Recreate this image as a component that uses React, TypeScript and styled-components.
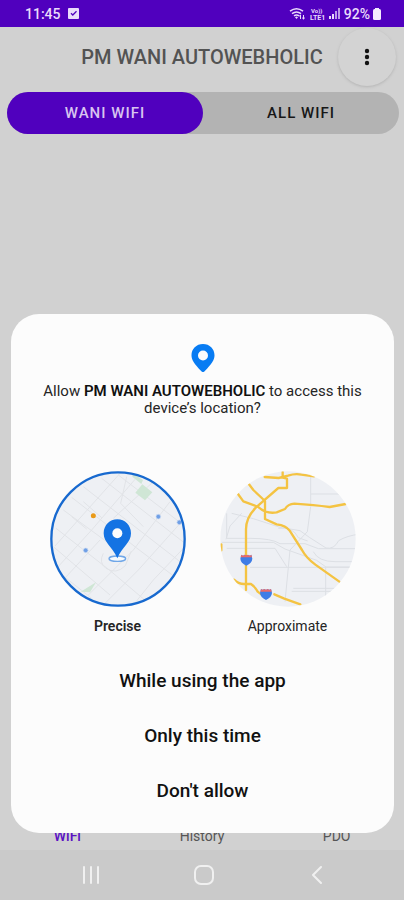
import React, { useState } from "react";
import styled, { createGlobalStyle } from "styled-components";

const GlobalStyle = createGlobalStyle`
  *, *::before, *::after { box-sizing: border-box; }
  body { margin: 0; background: #d1d1d1; font-family: Roboto, "Liberation Sans", sans-serif; }
  button, input { font: inherit; color: inherit; }
  button { padding: 0; border: 0; background: none; cursor: pointer; }
`;

const Screen = styled.div`
  position: relative;
  display: flex;
  flex-direction: column;
  min-height: 100vh;
  background: #d1d1d1;
`;

const StatusBar = styled.header`
  display: flex;
  align-items: center;
  justify-content: space-between;
  height: 27px;
  padding: 0 22px 0 25px;
  background: #5000be;
  color: #eadcfb;
  font-size: 14px;
  font-weight: 500;
`;

const StatusGroup = styled.div<{ $gap: number }>`
  display: flex;
  align-items: center;
  gap: ${({ $gap }) => $gap}px;
`;

const Battery = styled.span`
  display: flex;
  align-items: center;
  gap: 2px;
`;

const AppBar = styled.div`
  display: grid;
  grid-template-columns: 68px 1fr 68px;
  align-items: center;
  height: 60px;
`;

const Title = styled.h1`
  grid-column: 2;
  justify-self: center;
  margin: 0;
  color: #535353;
  font-size: 20px;
  font-weight: 500;
  line-height: 24px;
  text-align: center;
  white-space: nowrap;
`;

const MenuButton = styled.button`
  display: grid;
  place-items: center;
  justify-self: end;
  width: 58px;
  height: 58px;
  margin-right: 8px;
  border-radius: 50%;
  background: #d3d3d3;
  box-shadow: 0 1px 3px #b4b4b4;
`;

const Segments = styled.div`
  display: grid;
  grid-template-columns: 1fr 1fr;
  height: 42px;
  margin: 5px 5px 0 7px;
  border-radius: 21px;
  background: #b3b3b3;
`;

const Segment = styled.button<{ $active: boolean }>`
  border-radius: 21px;
  background: ${({ $active }) => ($active ? "#5000be" : "transparent")};
  color: ${({ $active }) => ($active ? "#d8c4f0" : "#171717")};
  font-size: 15px;
  font-weight: 500;
  letter-spacing: 1px;
`;

const TabBar = styled.nav`
  display: grid;
  grid-template-columns: repeat(3, 1fr);
  align-items: end;
  height: 56px;
  margin-top: auto;
  padding-bottom: 6px;
`;

const TabLink = styled.a<{ $active?: boolean }>`
  color: ${({ $active }) => ($active ? "#5a10c4" : "#555555")};
  font-size: 14px;
  font-weight: ${({ $active }) => ($active ? 500 : 400)};
  line-height: 16px;
  text-align: center;
  text-decoration: none;
`;

const SystemNav = styled.nav`
  display: grid;
  grid-template-columns: repeat(3, 1fr);
  height: 50px;
  padding: 0 30px 0 34px;
  background: #cacaca;
`;

const NavButton = styled.button`
  display: grid;
  place-items: center;
`;

const Dialog = styled.section`
  position: absolute;
  right: 10px;
  bottom: 67px;
  left: 11px;
  display: flex;
  flex-direction: column;
  align-items: center;
  padding: 30px 24px 15px;
  border-radius: 28px;
  background: #fcfcfc;
  color: #252525;
`;

const Question = styled.h2`
  max-width: 328px;
  margin: 11px 0 0;
  font-size: 15px;
  font-weight: 400;
  line-height: 17px;
  text-align: center;
`;

const AppName = styled.strong`
  color: #111111;
  font-weight: 600;
`;

const Choices = styled.div`
  display: flex;
  justify-content: center;
  gap: 34px;
  margin-top: 54px;
`;

const Choice = styled.label<{ $bold: boolean }>`
  display: flex;
  flex-direction: column;
  align-items: center;
  gap: 10px;
  width: 136px;
  font-size: 14px;
  font-weight: ${({ $bold }) => ($bold ? 600 : 400)};
  line-height: 18px;
  cursor: pointer;
`;

const HiddenRadio = styled.input`
  position: absolute;
  width: 1px;
  height: 1px;
  margin: 0;
  opacity: 0;
`;

const Actions = styled.div`
  display: flex;
  flex-direction: column;
  align-self: stretch;
  margin-top: 18px;
`;

const Action = styled.button`
  height: 55px;
  color: #111111;
  font-size: 19px;
  font-weight: 500;
`;

const CheckIcon = () => (
  <svg width="11" height="13" viewBox="0 0 11 13" aria-hidden="true">
    <rect y="1" width="11" height="11" rx="1" fill="#eadcfb" />
    <path d="M3 6.3 4.8 8 8.5 4.3" fill="none" stroke="#5000be" strokeWidth="1.3" />
  </svg>
);

const WifiIcon = () => (
  <svg width="17" height="14" viewBox="0 0 17 14" fill="none" stroke="#eadcfb" aria-hidden="true">
    <path d="M1 4.2Q7.5-.8 14 4.2M3 6.6q4.5-3.4 9 0M5 8.8q2.5-1.8 5 0" strokeWidth="1.5" />
    <path d="m6 10.2 1.5-.8 1.5.8-1.5 1.8z" fill="#eadcfb" stroke="none" />
    <path d="M11.5 12V8m-1.4 1.3L11.5 8M14.5 8v4m-1.4-1.3 1.4 1.3 1.4-1.3" />
  </svg>
);

const LteIcon = () => (
  <svg width="15" height="14" viewBox="0 0 15 14" aria-hidden="true" fill="#eadcfb" fontFamily="Roboto, sans-serif" fontWeight="700">
    <text x="1" y="6" fontSize="6">Vo))</text>
    <text x="0" y="13" fontSize="7">LTE1</text>
  </svg>
);

const SignalIcon = () => (
  <svg width="11" height="12" viewBox="0 0 11 12" fill="#eadcfb" aria-hidden="true">
    <rect y="8" width="2" height="3" />
    <rect x="3" y="6" width="2" height="5" />
    <rect x="6" y="3" width="2" height="8" opacity=".7" />
    <rect x="9" y="0" width="2" height="11" opacity=".7" />
  </svg>
);

const BatteryIcon = () => (
  <svg width="10" height="13" viewBox="0 0 10 13" fill="#f4ebff" aria-hidden="true">
    <rect x="1" y="2" width="8" height="11" rx="1.5" />
    <rect x="3" y="1" width="4" height="2" />
  </svg>
);

const DotsIcon = () => (
  <svg width="6" height="18" viewBox="0 0 6 18" fill="#111111" aria-hidden="true">
    <circle cx="3" cy="3" r="2.2" />
    <circle cx="3" cy="9" r="2.2" />
    <circle cx="3" cy="15" r="2.2" />
  </svg>
);

const PinIcon = () => (
  <svg width="24" height="28" viewBox="0 0 24 28" aria-hidden="true">
    <path d="M12 0C5.3 0 .5 4.9.5 11.2c0 5 2.8 8.5 9.9 16.1.9 1 2.3 1 3.2 0 7.1-7.6 9.9-11.1 9.9-16.1C23.5 4.9 18.7 0 12 0Z" fill="#087cf3" />
    <circle cx="12" cy="11.5" r="5" fill="#fcfcfc" />
  </svg>
);

const PreciseMap = ({ selected }: { selected: boolean }) => (
  <svg width="136" height="136" viewBox="30 33 408 408" aria-hidden="true">
    <defs>
      <clipPath id="precise-clip"><circle cx="234" cy="237" r="200" /></clipPath>
    </defs>
    <circle cx="234" cy="237" r="200" fill="#eef0f4" />
    <g clipPath="url(#precise-clip)">
      <g fill="none" stroke="#e1e3e7" strokeWidth="3">
        <path d="M130 80 420 305M95 112 290 264 430 370M70 150 200 245M48 205l160 125 130 110M40 260l170 145M35 320l120 95M185 55l250 195M235 45l195 150" />
        <path d="M240 40 45 258M285 58 155 210 50 325M340 65 220 175M180 240 65 365M390 125 280 270 145 405M425 185 295 330 195 430M435 260 340 360 280 435M130 125l55 48M95 170l45 37" />
        <path d="M260 50l-18 80 68 70M190 280q-15 28 8 45 30 20 58-8l18-44" />
      </g>
      <path d="M278 40l31 20-5 12-27-22ZM307 73l30 24-22 24-29-23Z" fill="#cfe6d5" />
      <path d="M168 367l-18 30-28-2Z" fill="#cfe6d5" />
      <circle cx="160" cy="167" r="7.5" fill="#e99a18" />
      <g fill="#6f9fe6" stroke="#cddcf3" strokeWidth="2">
        <circle cx="355" cy="170" r="7" />
        <circle cx="137" cy="271" r="7" />
        <circle cx="418" cy="187" r="7" />
      </g>
    </g>
    <ellipse cx="232" cy="296" rx="25" ry="8" fill="#f7fafd" stroke="#70a7e8" strokeWidth="4" />
    <path d="M232 178c-23 0-41 18-41 42 0 28 25 39 41 75 16-36 41-47 41-75 0-24-18-42-41-42Z" fill="#1473e3" />
    <circle cx="232" cy="220" r="15" fill="#fcfcfc" />
    {selected && <circle cx="234" cy="237" r="200" fill="none" stroke="#1769cf" strokeWidth="7" />}
  </svg>
);

const RouteShield = ({ x, y }: { x: number; y: number }) => (
  <g transform={`translate(${x} ${y})`}>
    <path d="M-15-15q5 5 10 0 5 4 10 0 5 5 10 0l3 12Q17 10 0 18-17 10-18-3Z" fill="#3f7de6" />
    <path d="M-15-15q5 5 10 0 5 4 10 0 5 5 10 0l2 8h-34Z" fill="#ed6a66" />
  </g>
);

const ApproximateMap = ({ selected }: { selected: boolean }) => (
  <svg width="136" height="136" viewBox="30 33 408 408" aria-hidden="true">
    <defs>
      <clipPath id="approximate-clip"><circle cx="234" cy="237" r="203" /></clipPath>
    </defs>
    <g clipPath="url(#approximate-clip)">
      <rect x="30" y="33" width="408" height="408" fill="#eef0f4" />
      <g fill="none" stroke="#dcdfe4" strokeWidth="3">
        <path d="M302 50v90l-10 75-52 55-15 155M303 102h110M50 160v75h70q65 0 90 16h75l40 15h115M35 247h155l35 20 95 34 28 20h90" />
        <path d="M65 160l65 16 80 26 60 10 28 20 50 32q24 5 38-22 24-15 65-20M50 265h145l35 55M120 322h315M245 394h145M250 385h160M347 322v105M95 160l-35 38-12 40" />
        <path d="M205 205q44-6 60 28l28 10M310 275q15 30 65 30h60" />
      </g>
      <g fill="none" stroke="#f4c342" strokeWidth="7" strokeLinecap="round" strokeLinejoin="round">
        <path d="M164 51l42 3 28-7q22-7 40-3l38 5M218 36v17l13 3v28h-26l-60 52q-37 32-37 72v182" />
        <path d="M117 73l13 17 35 33v54l35 16q28 3 39 19l37 58q12 23 40 44l72 51M84 102l16 22 45 17q24 22 55 16l25-10q9-15 28-16 60 4 106 10l48-9" />
        <path d="M72 359q13 13 30 13h21q11 7 20 23l12 9M193 403l30 13 48 17M34 253v18" />
      </g>
      <RouteShield x={109} y={299} />
      <RouteShield x={168} y={402} />
    </g>
    {selected && <circle cx="234" cy="237" r="200" fill="none" stroke="#1769cf" strokeWidth="7" />}
  </svg>
);

const RecentsIcon = () => (
  <svg width="18" height="18" viewBox="0 0 18 18" fill="none" stroke="#f0f0f0" strokeWidth="2" strokeLinecap="round" aria-hidden="true">
    <path d="M2 1v16M9 1v16M16 1v16" />
  </svg>
);

const HomeIcon = () => (
  <svg width="20" height="20" viewBox="0 0 20 20" fill="none" stroke="#f0f0f0" strokeWidth="2" aria-hidden="true">
    <rect x="1" y="1" width="18" height="18" rx="6" />
  </svg>
);

const BackIcon = () => (
  <svg width="12" height="18" viewBox="0 0 12 18" fill="none" stroke="#f0f0f0" strokeWidth="2" strokeLinecap="round" strokeLinejoin="round" aria-hidden="true">
    <path d="M10 1 2 9l8 8" />
  </svg>
);

export default function App() {
  const [segment, setSegment] = useState("wani");
  const [accuracy, setAccuracy] = useState("precise");
  return (
    <>
      <GlobalStyle />
      <Screen>
        <StatusBar>
          <StatusGroup $gap={7}>
            <span>11:45</span>
            <CheckIcon />
          </StatusGroup>
          <StatusGroup $gap={4}>
            <WifiIcon />
            <LteIcon />
            <SignalIcon />
            <Battery>92%<BatteryIcon /></Battery>
          </StatusGroup>
        </StatusBar>
        <AppBar>
          <Title>PM WANI AUTOWEBHOLIC</Title>
          <MenuButton aria-label="More options"><DotsIcon /></MenuButton>
        </AppBar>
        <Segments>
          <Segment $active={segment === "wani"} onClick={() => setSegment("wani")}>WANI WIFI</Segment>
          <Segment $active={segment === "all"} onClick={() => setSegment("all")}>ALL WIFI</Segment>
        </Segments>
        <TabBar>
          <TabLink href="#wifi" $active>WiFi</TabLink>
          <TabLink href="#history">History</TabLink>
          <TabLink href="#pdo">PDO</TabLink>
        </TabBar>
        <SystemNav>
          <NavButton aria-label="Recent apps"><RecentsIcon /></NavButton>
          <NavButton aria-label="Home"><HomeIcon /></NavButton>
          <NavButton aria-label="Back"><BackIcon /></NavButton>
        </SystemNav>
        <Dialog role="dialog" aria-labelledby="question">
          <PinIcon />
          <Question id="question">
            Allow <AppName>PM WANI AUTOWEBHOLIC</AppName> to access this device’s location?
          </Question>
          <Choices role="radiogroup" aria-label="Location accuracy">
            <Choice $bold={accuracy === "precise"}>
              <HiddenRadio type="radio" name="accuracy" checked={accuracy === "precise"} onChange={() => setAccuracy("precise")} />
              <PreciseMap selected={accuracy === "precise"} />
              Precise
            </Choice>
            <Choice $bold={accuracy === "approximate"}>
              <HiddenRadio type="radio" name="accuracy" checked={accuracy === "approximate"} onChange={() => setAccuracy("approximate")} />
              <ApproximateMap selected={accuracy === "approximate"} />
              Approximate
            </Choice>
          </Choices>
          <Actions>
            <Action>While using the app</Action>
            <Action>Only this time</Action>
            <Action>Don't allow</Action>
          </Actions>
        </Dialog>
      </Screen>
    </>
  );
}
